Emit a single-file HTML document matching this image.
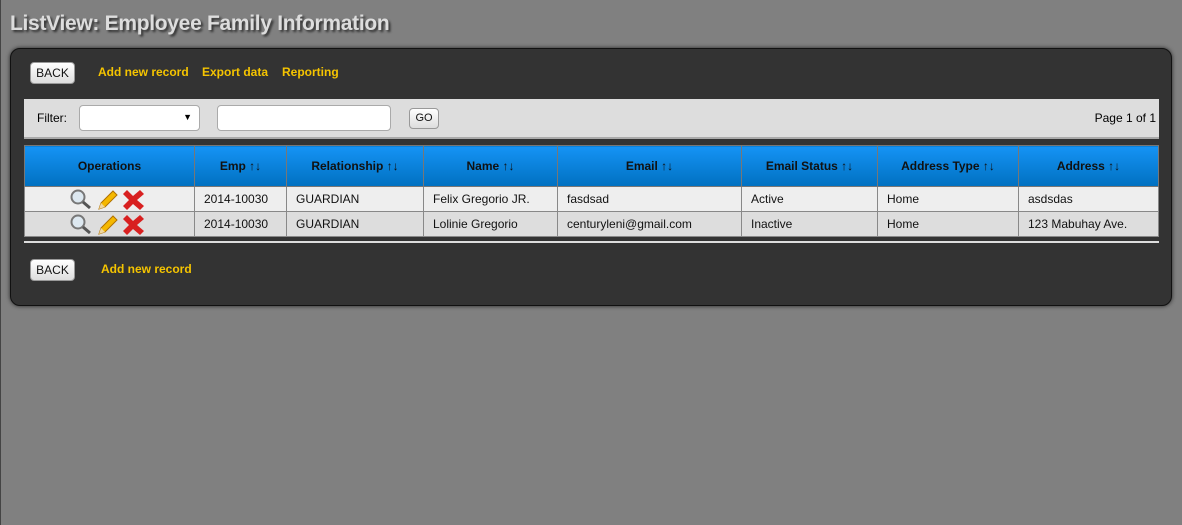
<!DOCTYPE html>
<html><head><style>
body{margin:0;width:1182px;height:525px;background:#808080;font-family:"Liberation Sans",sans-serif;position:relative;overflow:hidden;border-left:1px solid #444;box-sizing:border-box}
.t{position:absolute;left:9px;top:12px;font-size:21px;font-weight:bold;color:#ddd;text-shadow:2px 2px 2px #333;letter-spacing:-0.3px}
.p{position:absolute;left:9px;top:48px;width:1160px;height:256px;background:#333;border:1px solid #111;border-radius:10px;box-shadow:0 0 4px #222}
.btn{position:absolute;background:linear-gradient(#fff,#ddd);border:1px solid #999;border-radius:4px;font-size:12px;color:#111;text-align:center;box-sizing:border-box}
.l{position:absolute;color:#f5c400;font-size:12px;font-weight:bold}
.f{position:absolute;left:13px;top:50px;width:1135px;height:38px;background:#ddd;border-bottom:2px solid #aaa}
.in{position:absolute;background:#fff;border:1px solid #aaa;border-radius:4px;box-sizing:border-box}
table{position:absolute;left:13px;top:96px;width:1135px;border-collapse:collapse;font-size:12px;border:1px solid #777}
th{height:40px;background:linear-gradient(#1593f5,#0070c0);color:#111;font-weight:bold;border:1px solid #777;padding:0}
td{height:24px;border:1px solid #888;padding:0 9px;color:#111}
tr.a td{background:#eee} tr.b td{background:#ddd}
.hr{position:absolute;left:13px;top:192px;width:1135px;height:2px;background:#ddd}
svg{vertical-align:middle}
</style></head><body>
<div class="t">ListView: Employee Family Information</div>
<div class="p">
<div class="btn" style="left:19px;top:13px;width:45px;height:22px;line-height:20px">BACK</div>
<div class="l" style="left:87px;top:16px">Add new record</div>
<div class="l" style="left:191px;top:16px">Export data</div>
<div class="l" style="left:271px;top:16px">Reporting</div>
<div class="f">
<span style="position:absolute;left:13px;top:12px;font-size:12px">Filter:</span>
<div class="in" style="left:55px;top:6px;width:121px;height:26px"><span style="position:absolute;right:7px;top:6px;font-size:9px">▼</span></div>
<div class="in" style="left:193px;top:6px;width:174px;height:26px"></div>
<div class="btn" style="left:385px;top:9px;width:30px;height:21px;line-height:19px;font-size:11px">GO</div>
<span style="position:absolute;right:3px;top:12px;font-size:12px">Page 1 of 1</span>
</div>
<table>
<tr><th style="width:169px">Operations</th><th style="width:91px">Emp ↑↓</th><th style="width:136px">Relationship ↑↓</th><th style="width:133px">Name ↑↓</th><th style="width:183px">Email ↑↓</th><th style="width:135px">Email Status ↑↓</th><th style="width:140px">Address Type ↑↓</th><th>Address ↑↓</th></tr>
<tr class="a"><td style="text-align:center;padding:0"><svg width="82" height="22" viewBox="0 0 82 22"><circle cx="9" cy="9" r="6.5" fill="#dde8f0" stroke="#777" stroke-width="2"/><line x1="14" y1="14" x2="21" y2="20" stroke="#555" stroke-width="3"/><path d="M30 21 L32 15 L44 3 L48 7 L36 19 Z" fill="#f5b800" stroke="#b07000"/><path d="M30 21 L32 15 L36 19Z" fill="#f0d8a0"/><path d="M58 2 L64 8 L71 2 L75 6 L68 12 L75 18 L71 22 L64 16 L58 22 L54 18 L60 12 L54 6Z" fill="#d82020"/></svg></td><td>2014-10030</td><td>GUARDIAN</td><td>Felix Gregorio JR.</td><td>fasdsad</td><td>Active</td><td>Home</td><td>asdsdas</td></tr>
<tr class="b"><td style="text-align:center;padding:0"><svg width="82" height="22" viewBox="0 0 82 22"><circle cx="9" cy="9" r="6.5" fill="#dde8f0" stroke="#777" stroke-width="2"/><line x1="14" y1="14" x2="21" y2="20" stroke="#555" stroke-width="3"/><path d="M30 21 L32 15 L44 3 L48 7 L36 19 Z" fill="#f5b800" stroke="#b07000"/><path d="M30 21 L32 15 L36 19Z" fill="#f0d8a0"/><path d="M58 2 L64 8 L71 2 L75 6 L68 12 L75 18 L71 22 L64 16 L58 22 L54 18 L60 12 L54 6Z" fill="#d82020"/></svg></td><td>2014-10030</td><td>GUARDIAN</td><td>Lolinie Gregorio</td><td>centuryleni@gmail.com</td><td>Inactive</td><td>Home</td><td>123 Mabuhay Ave.</td></tr>
</table>
<div class="hr"></div>
<div class="btn" style="left:19px;top:210px;width:45px;height:22px;line-height:20px">BACK</div>
<div class="l" style="left:90px;top:213px">Add new record</div>
</div>
</body></html>
